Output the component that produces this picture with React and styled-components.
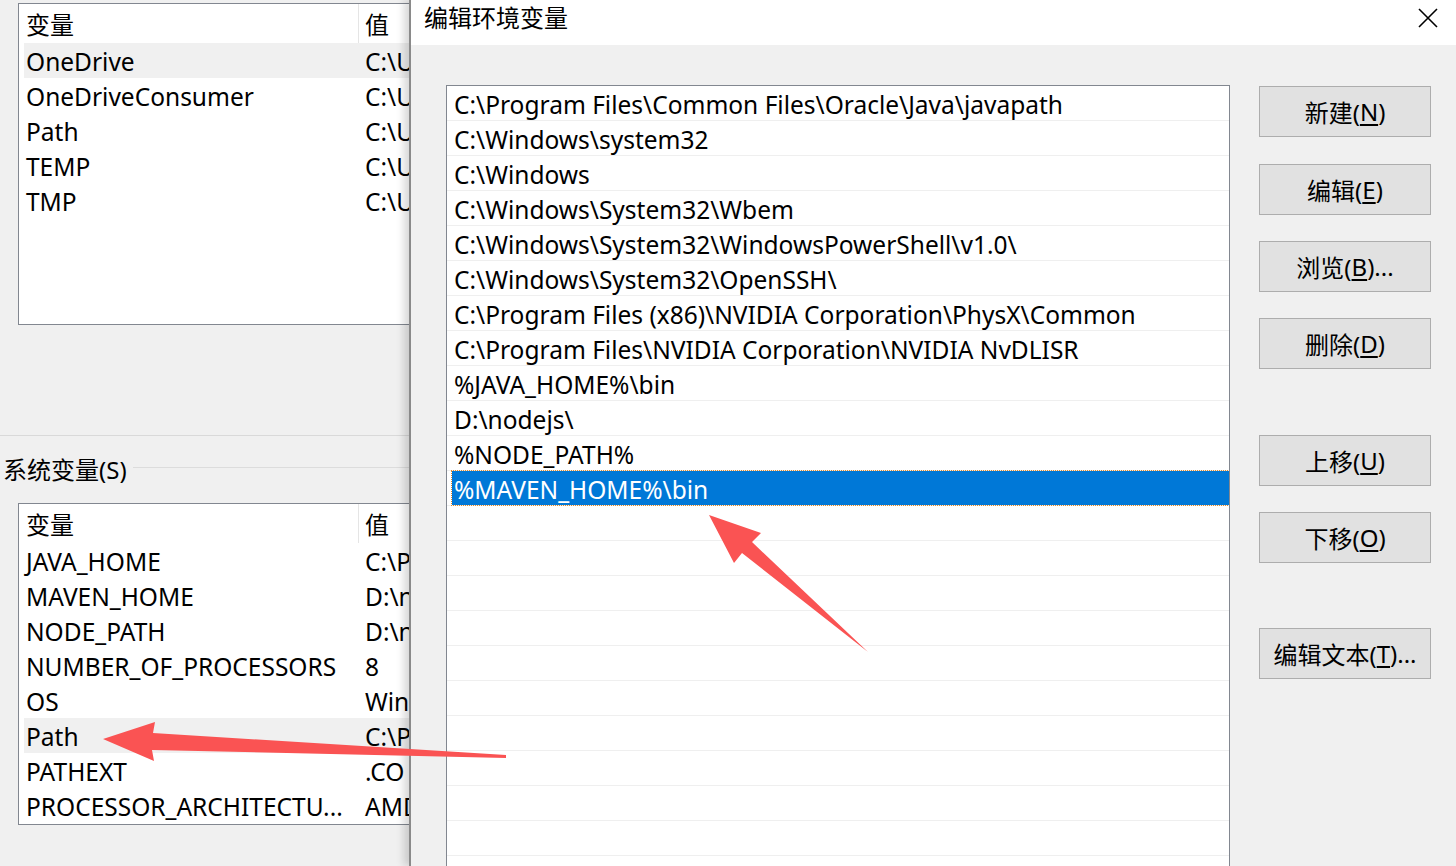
import React from "react";
import styled, { createGlobalStyle } from "styled-components";

const GlobalStyle = createGlobalStyle`
    html, body {
        margin: 0;
        padding: 0;
        background: #f0f0f0;
        overflow: hidden;
    }
    body {
        font-family: "Noto Sans", "Noto Sans CJK SC", sans-serif;
        color: #000;
    }
`

// only the part of each value that shows left of the dialog
const userVars = [
    { name: "OneDrive", value: "C:\\U", hover: true },
    { name: "OneDriveConsumer", value: "C:\\U" },
    { name: "Path", value: "C:\\U" },
    { name: "TEMP", value: "C:\\U" },
    { name: "TMP", value: "C:\\U" },
]

const systemVars = [
    { name: "JAVA_HOME", value: "C:\\P" },
    { name: "MAVEN_HOME", value: "D:\\n" },
    { name: "NODE_PATH", value: "D:\\n" },
    { name: "NUMBER_OF_PROCESSORS", value: "8" },
    { name: "OS", value: "Win" },
    { name: "Path", value: "C:\\P", hover: true },
    { name: "PATHEXT", value: ".CO" },
    { name: "PROCESSOR_ARCHITECTU...", value: "AMD" },
]

const paths = [
    "C:\\Program Files\\Common Files\\Oracle\\Java\\javapath",
    "C:\\Windows\\system32",
    "C:\\Windows",
    "C:\\Windows\\System32\\Wbem",
    "C:\\Windows\\System32\\WindowsPowerShell\\v1.0\\",
    "C:\\Windows\\System32\\OpenSSH\\",
    "C:\\Program Files (x86)\\NVIDIA Corporation\\PhysX\\Common",
    "C:\\Program Files\\NVIDIA Corporation\\NVIDIA NvDLISR",
    "%JAVA_HOME%\\bin",
    "D:\\nodejs\\",
    "%NODE_PATH%",
    "%MAVEN_HOME%\\bin",
]

const buttons = [
    { label: "新建(", key: "N", tail: ")", space: 0 },
    { label: "编辑(", key: "E", tail: ")", space: 27 },
    { label: "浏览(", key: "B", tail: ")...", space: 26 },
    { label: "删除(", key: "D", tail: ")", space: 26 },
    { label: "上移(", key: "U", tail: ")", space: 66 },
    { label: "下移(", key: "O", tail: ")", space: 26 },
    { label: "编辑文本(", key: "T", tail: ")...", space: 65 },
]

const VarTable = ({ rows }) => {
    return (
        <VarBox>
            <HeaderRow>
                <HeaderCell>变量</HeaderCell>
                <HeaderCell $value>值</HeaderCell>
            </HeaderRow>
            {rows.map((row, index) => {
                return (
                    <VarRow key={index} $hover={row.hover}>
                        <NameCell>{row.name}</NameCell>
                        <ValueCell>{row.value}</ValueCell>
                    </VarRow>
                )
            })}
        </VarBox>
    )
}

const App = () => {
    const emptyRows = Array.from({ length: 12 })

    return (
        <Screen>
            <GlobalStyle />

            <BackWindow>
                <VarTable rows={userVars} />
                <Divider />
                <GroupHeader>
                    <span>系统变量(S)</span>
                    <GroupLine />
                </GroupHeader>
                <VarTable rows={systemVars} />
            </BackWindow>

            <Dialog>
                <TitleBar>
                    <Title>编辑环境变量</Title>
                    <CloseButton>
                        <svg width="20" height="20" viewBox="0 0 20 20">
                            <path d="M1 1 L19 19 M19 1 L1 19" stroke="#000" strokeWidth="1.6" fill="none" />
                        </svg>
                    </CloseButton>
                </TitleBar>

                <DialogBody>
                    <PathList>
                        {paths.map((path, index) => {
                            const selected = index === paths.length - 1
                            return (
                                <PathRow key={index}>
                                    <PathItem $selected={selected}>{path}</PathItem>
                                </PathRow>
                            )
                        })}
                        {emptyRows.map((_, index) => {
                            return (
                                <PathRow key={"e" + index}>
                                    <PathItem />
                                </PathRow>
                            )
                        })}
                    </PathList>

                    <ButtonColumn>
                        {buttons.map((btn, index) => {
                            return (
                                <ActionButton key={index} $space={btn.space}>
                                    {btn.label}<u>{btn.key}</u>{btn.tail}
                                </ActionButton>
                            )
                        })}
                    </ButtonColumn>
                </DialogBody>
            </Dialog>

            <Arrows viewBox="0 0 1456 866" width="1456" height="866">
                <polygon
                    points="103,739 155,722 153,733 506,755 506,758 152,750 154,761"
                    fill="#fa5353" />
                <polygon
                    points="709,515 761,533 752,542 868,652 742,553 734,563"
                    fill="#fa5353" />
            </Arrows>
        </Screen>
    )
}

const Screen = styled.div`
    position: relative;
    width: 1456px;
    height: 866px;
    display: flex;
    flex-direction: row;
    overflow: hidden;
    background: #f0f0f0;
`

const BackWindow = styled.div`
    width: 409px;
    flex: none;
    overflow: hidden;
    display: flex;
    flex-direction: column;
    padding-top: 3px;
    box-sizing: border-box;
`

const VarBox = styled.div`
    margin-left: 18px;
    width: 520px;
    height: 322px;
    flex: none;
    box-sizing: border-box;
    border: 1px solid #828790;
    background: #fff;
    font-size: 24.5px;
`

const HeaderRow = styled.div`
    display: flex;
    height: 39px;
    align-items: center;
    font-size: 24px;
`

const HeaderCell = styled.div`
    height: 100%;
    flex: none;
    display: flex;
    align-items: center;
    box-sizing: border-box;
    width: ${p => p.$value ? "auto" : "339px"};
    padding-left: ${p => p.$value ? "6px" : "7px"};
    border-left: ${p => p.$value ? "1px solid #e5e5e5" : "none"};
`

const VarRow = styled.div`
    display: flex;
    height: 35px;
    margin-left: 5px;
    padding-top: 2px;
    box-sizing: border-box;
    align-items: center;
    background: ${p => p.$hover ? "#f0f0f0" : "transparent"};
    white-space: nowrap;
`

const NameCell = styled.div`
    width: 334px;
    flex: none;
    padding-left: 2px;
    box-sizing: border-box;
`

const ValueCell = styled.div`
    flex: none;
    padding-left: 7px;
`

const Divider = styled.div`
    height: 1px;
    background: #d9d9d9;
    margin-top: 110px;
    flex: none;
`

const GroupHeader = styled.div`
    display: flex;
    align-items: center;
    height: 32px;
    margin-top: 16px;
    margin-bottom: 19px;
    padding-left: 3px;
    font-size: 24px;
    white-space: nowrap;
    gap: 6px;
`

const GroupLine = styled.div`
    flex: 1;
    height: 1px;
    background: #dcdcdc;
    margin-top: -2px;
`

const Dialog = styled.div`
    flex: 1;
    position: relative;
    z-index: 1;
    display: flex;
    flex-direction: column;
    background: #f0f0f0;
    border-left: 2px solid #8a8a8a;
    box-shadow: -5px 0 8px rgba(0, 0, 0, 0.16);
`

const TitleBar = styled.div`
    height: 45px;
    flex: none;
    background: #fff;
    display: flex;
    align-items: flex-start;
`

const Title = styled.div`
    padding-left: 13px;
    line-height: 36px;
    font-size: 24px;
`

const CloseButton = styled.div`
    margin-left: auto;
    width: 56px;
    height: 36px;
    display: flex;
    align-items: center;
    justify-content: center;
`

const DialogBody = styled.div`
    flex: 1;
    display: flex;
    flex-direction: row;
    padding: 40px 0 0 35px;
    min-height: 0;
`

const PathList = styled.div`
    width: 784px;
    box-sizing: border-box;
    border: 1px solid #828790;
    border-bottom: none;
    background: #fff;
    overflow: hidden;
    font-size: 24.5px;
`

const PathRow = styled.div`
    height: 35px;
    box-sizing: border-box;
    border-bottom: 1px solid #efefef;
    display: flex;
`

const PathItem = styled.div`
    flex: 1;
    margin-left: 5px;
    padding-left: 2px;
    padding-top: 2px;
    display: flex;
    align-items: center;
    white-space: nowrap;
    box-sizing: border-box;
    background: ${p => p.$selected ? "#0078d7" : "transparent"};
    color: ${p => p.$selected ? "#fff" : "#000"};
    outline: ${p => p.$selected ? "1px dotted #e08a2c" : "none"};
`

const ButtonColumn = styled.div`
    width: 172px;
    margin-left: 29px;
    padding-top: 1px;
    display: flex;
    flex-direction: column;
`

const ActionButton = styled.div`
    height: 51px;
    margin-top: ${p => p.$space}px;
    box-sizing: border-box;
    border: 1px solid #adadad;
    background: #e1e1e1;
    display: flex;
    align-items: center;
    justify-content: center;
    font-size: 24px;
    white-space: nowrap;

    u {
        text-underline-offset: 3px;
    }
`

const Arrows = styled.svg`
    position: absolute;
    left: 0;
    top: 0;
    z-index: 5;
    pointer-events: none;
`

export default App
